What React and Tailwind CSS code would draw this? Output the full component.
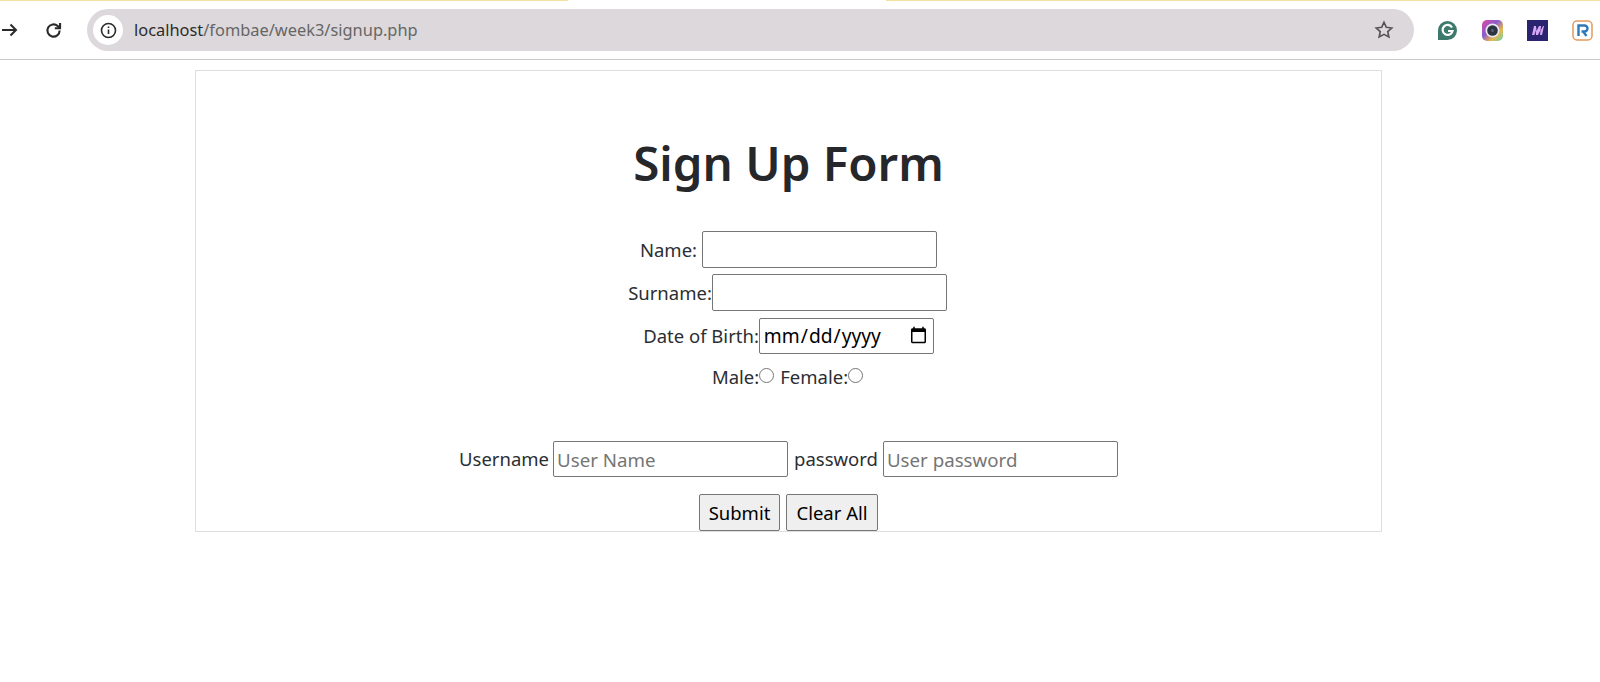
const font = { fontFamily: '"Noto Sans", "Open Sans", sans-serif' };

function Row({ className = "", children }) {
  return <div className={"flex items-center justify-center " + className}>{children}</div>;
}

const inputCls = "border border-[#767676] rounded-[2px] bg-white outline-none h-full w-[235px] px-[3px] text-[18.700px] text-[#212529] placeholder:text-[#757575]";

function Extensions() {
  return (
    <div className="flex items-center gap-[24px] mr-[5px]">
      <svg width="21" height="21" viewBox="0 0 21 21">
        <path d="M10.500 1a9.500 9.500 0 1 1 0 19H1v-9.500A9.500 9.500 0 0 1 10.500 1z" fill="#3d7a6d" />
        <path d="M15 7.500A5 5 0 1 0 15.500 11H11" fill="none" stroke="#fff" strokeWidth="2.200" />
      </svg>
      <svg width="21" height="21" viewBox="0 0 21 21">
        <defs>
          <linearGradient id="rb" x1="0" y1="0" x2="1" y2="1">
            <stop offset="0" stopColor="#e0489a" />
            <stop offset="0.400" stopColor="#8a5bd0" />
            <stop offset="0.700" stopColor="#e9b84a" />
            <stop offset="1" stopColor="#5fd6b8" />
          </linearGradient>
        </defs>
        <rect width="21" height="21" rx="5" fill="url(#rb)" />
        <circle cx="10.500" cy="10.500" r="7" fill="#e8e8ee" />
        <circle cx="10.500" cy="10.500" r="5.300" fill="#2c3442" />
        <circle cx="10.500" cy="10.500" r="1.500" fill="#56627a" />
      </svg>
      <svg width="21" height="21" viewBox="0 0 21 21">
        <rect width="21" height="21" fill="#2a2470" />
        <path d="M5 15l2-9h2l.500 5 2.500-5h2l-.500 5 2.500-5h1l-2 9h-2l.500-5-2.500 5h-2l-.500-5-1 5z" fill="#d9a6f5" />
      </svg>
      <svg width="21" height="21" viewBox="0 0 21 21">
        <rect x="1" y="1" width="19" height="19" rx="4" fill="#fff" stroke="#e59a5c" strokeWidth="1.500" />
        <path d="M6.500 16V5.500h6a3 3 0 0 1 0 6H9.500" fill="none" stroke="#2f79b7" strokeWidth="2.400" />
        <path d="M11.500 12l3 4" fill="none" stroke="#2f79b7" strokeWidth="2.400" />
      </svg>
    </div>
  );
}

export default function App() {
  return (
    <div className="h-[682px] w-[1600px] bg-white overflow-hidden text-[#2b2e33]" style={font}>
      <header className="h-[60px] border-b border-[#c9c9c9] flex flex-col">
        <div className="h-[1px] flex">
          <div className="w-[568px] bg-[#f5e2a0]" />
          <div className="w-[318px] bg-white" />
          <div className="flex-1 bg-[#f5e2a0]" />
        </div>
        <div className="flex-1 flex items-center pl-[1px] pr-[2px]">
          <svg width="18" height="18" viewBox="0 0 18 18" fill="none" stroke="#2a2a2a" strokeWidth="2">
            <path d="M1 9h14M9.500 3.500 15 9l-5.500 5.500" />
          </svg>
          <svg width="21" height="21" viewBox="0 0 24 24" fill="none" stroke="#2a2a2a" strokeWidth="2.400" className="ml-[24px]">
            <path d="M19 12a7 7 0 1 1-2.200-5.100L19 9" />
            <path d="M19.500 3.500V9.500h-6" />
          </svg>
          <div className="ml-[23px] h-[42px] w-[1327px] rounded-full bg-[#dcd8db] flex items-center pl-[6px] pr-[20px]">
            <div className="w-[30px] h-[30px] rounded-full bg-white flex items-center justify-center">
              <svg width="17" height="17" viewBox="0 0 17 17" fill="none" stroke="#2a2a2a" strokeWidth="1.600">
                <circle cx="8.500" cy="8.500" r="7" />
                <path d="M8.500 7.500v4.500M8.500 4.500v1.500" />
              </svg>
            </div>
            <div className="ml-[11px] text-[16.400px] leading-none text-[#666] flex-1">
              <span className="text-[#2c2c2c]">localhost</span>/fombae/week3/signup.php
            </div>
            <svg width="20" height="20" viewBox="0 0 24 24" fill="none" stroke="#555" strokeWidth="2">
              <path d="M12 2.800l2.800 6 6.500.8-4.800 4.400 1.300 6.400L12 17.200 6.200 20.400l1.300-6.400L2.700 9.600l6.500-.8z" />
            </svg>
          </div>
          <div className="flex-1 flex justify-end">
            <Extensions />
          </div>
        </div>
      </header>

      <main className="mt-[10px] ml-[195px] w-[1187px] h-[462px] border border-[#dedede] flex flex-col items-center">
        <h1 className="mt-[53px] h-[78px] text-[47.500px] leading-[78px] font-semibold text-[#26272b]">Sign Up Form</h1>
        <form className="text-[18.500px] w-full">
          <Row className="mt-[29px] h-[37px]">
            <span className="mr-[5px]">Name:</span>
            <input className={inputCls} aria-label="Name" />
          </Row>
          <Row className="mt-[6px] h-[37px] pr-[2px]">
            <span>Surname:</span>
            <input className={inputCls} aria-label="Surname" />
          </Row>
          <Row className="mt-[7px] h-[36px]">
            <span>Date of Birth:</span>
            <input type="date" className="border border-[#767676] rounded-[2px] bg-white h-full w-[175px] pl-[3px] pr-[3px] text-[19.200px] text-black" aria-label="Date of Birth" />
          </Row>
          <Row className="mt-[8px] h-[30px] pr-[2px]">
            <span>Male:</span>
            <input type="radio" name="g" className="w-[15px] h-[15px] m-0 mb-[3px]" aria-label="Male" />
            <span className="ml-[6px]">Female:</span>
            <input type="radio" name="g" className="w-[15px] h-[15px] m-0 mb-[3px]" aria-label="Female" />
          </Row>
          <Row className="mt-[49px] h-[36px]">
            <span className="mr-[4px]">Username</span>
            <input className={inputCls} placeholder="User Name" aria-label="Username" />
            <span className="ml-[6px] mr-[5px]">password</span>
            <input className={inputCls} placeholder="User password" aria-label="password" />
          </Row>
          <Row className="mt-[17px] h-[37px] gap-[6px]">
            <button type="button" className="h-full w-[81px] border border-[#767676] rounded-[2px] bg-[#efefef] text-[18.500px] text-black">Submit</button>
            <button type="button" className="h-full w-[92px] border border-[#767676] rounded-[2px] bg-[#efefef] text-[18.500px] text-black">Clear All</button>
          </Row>
        </form>
      </main>
    </div>
  );
}
